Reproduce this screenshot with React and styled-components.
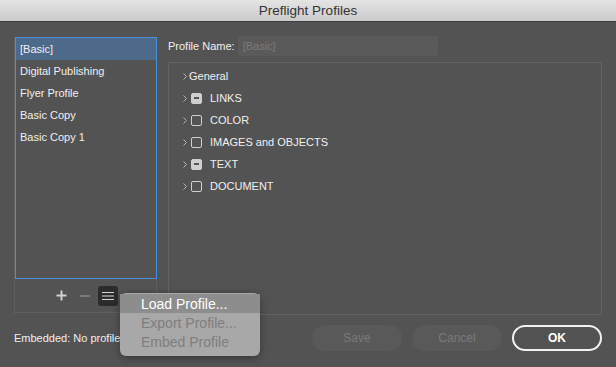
import styled, { createGlobalStyle } from "styled-components";

const GlobalStyle = createGlobalStyle`
  html, body {
    margin: 0;
    padding: 0;
    background: #535353;
    overflow: hidden;
  }
  * {
    box-sizing: border-box;
  }
`;

const Window = styled.div`
  position: relative;
  width: 616px;
  height: 367px;
  background: #535353;
  font-family: "Liberation Sans", Arial, sans-serif;
  font-size: 11px;
  color: #f0f0f0;
`;

const TitleBar = styled.div`
  height: 22px;
  display: flex;
  align-items: center;
  justify-content: center;
  background: linear-gradient(#e4e4e4, #cbcbcb);
  border-bottom: 1px solid #3c3c3c;
  color: #333;
  font-size: 13.5px;
`;

const Main = styled.div`
  display: grid;
  grid-template-columns: 143px 434px;
  column-gap: 11px;
  padding: 15px 14px 0 14px;
`;

const LeftBox = styled.div`
  height: 276px;
  border: 1px solid #5f5f5f;
  display: flex;
  flex-direction: column;
`;

const List = styled.div`
  height: 242px;
  margin: -1px -1px 0 0;
  border: 1px solid #4a90d9;
`;

const ListRow = styled.div`
  height: 22px;
  display: flex;
  align-items: center;
  padding-left: 4px;
  background: ${(p) => (p.$selected ? "#4d6a8a" : "transparent")};
`;

const ListTools = styled.div`
  flex: 1;
  display: flex;
  align-items: center;
  justify-content: center;
  padding-left: 2px;
`;

const ToolGlyph = styled.span`
  width: 12px;
  margin-right: ${(p) => (p.$dim ? "7px" : "12px")};
  display: flex;
  justify-content: center;
`;

const MenuButton = styled.div`
  width: 20px;
  height: 20px;
  border-radius: 3px;
  background: #2c2c2c;
  display: flex;
  align-items: center;
  justify-content: center;
`;

const Right = styled.div`
  display: flex;
  flex-direction: column;
  gap: 6px;
`;

const NameRow = styled.div`
  height: 20px;
  display: flex;
  align-items: center;
  gap: 3px;
  margin-top: -1px;
`;

const NameInput = styled.div`
  width: 200px;
  height: 20px;
  background: #5a5a5a;
  border-radius: 2px;
  color: #7b7b7b;
  display: flex;
  align-items: center;
  padding-left: 5px;
`;

const Tree = styled.div`
  height: 253px;
  border: 1px solid #626262;
  padding-top: 2px;
  padding-left: 12px;
`;

const TreeRow = styled.div`
  height: 22px;
  display: flex;
  align-items: center;
`;

const Chevron = styled.svg`
  width: 8px;
  height: 9px;
  margin-right: ${(p) => (p.$tight ? "0" : "2px")};
`;

const Check = styled.span`
  width: 11px;
  height: 11px;
  border-radius: 2px;
  margin-right: 8px;
  display: flex;
  align-items: center;
  justify-content: center;
  border: 1px solid #cfcfcf;
  background: ${(p) => (p.$mixed ? "#cfcfcf" : "transparent")};

  &::after {
    content: "";
    display: ${(p) => (p.$mixed ? "block" : "none")};
    width: 5px;
    height: 2px;
    background: #555;
  }
`;

const Footer = styled.div`
  display: flex;
  align-items: center;
  padding: 10px 14px 0 14px;
  gap: 10px;
`;

const Embedded = styled.div`
  flex: 1;
`;

const Button = styled.div`
  width: 90px;
  height: 26px;
  border-radius: 13px;
  display: flex;
  align-items: center;
  justify-content: center;
  font-size: 12px;
  background: ${(p) => (p.$primary ? "#535353" : "#595959")};
  color: ${(p) => (p.$primary ? "#ffffff" : "#7a7a7a")};
  border: ${(p) => (p.$primary ? "2px solid #f2f2f2" : "none")};
  font-weight: ${(p) => (p.$primary ? "bold" : "normal")};
`;

const Menu = styled.div`
  position: absolute;
  left: 120px;
  top: 293px;
  width: 140px;
  padding: 1px 0 5px;
  border-radius: 6px;
  background: #a8a8a8;
  box-shadow: 0 2px 8px rgba(0, 0, 0, 0.35);
  font-size: 14px;
`;

const MenuItem = styled.div`
  height: 19px;
  display: flex;
  align-items: center;
  padding-left: 21px;
  color: ${(p) => (p.$disabled ? "#7e7e7e" : "#ffffff")};
  background: ${(p) => (p.$active ? "#8d8d8d" : "transparent")};
`;

const profiles = ["[Basic]", "Digital Publishing", "Flyer Profile", "Basic Copy", "Basic Copy 1"];

const sections = [
  { label: "General" },
  { label: "LINKS", check: "mixed" },
  { label: "COLOR", check: "off" },
  { label: "IMAGES and OBJECTS", check: "off" },
  { label: "TEXT", check: "mixed" },
  { label: "DOCUMENT", check: "off" },
];

function ChevronIcon({ tight }) {
  return (
    <Chevron viewBox="0 0 8 9" $tight={tight}>
      <path d="M2.5 1.5l3 3-3 3" fill="none" stroke="#b5b5b5" strokeWidth="1" />
    </Chevron>
  );
}

export default function App() {
  return (
    <Window>
      <GlobalStyle />
      <TitleBar>Preflight Profiles</TitleBar>
      <Main>
        <LeftBox>
          <List>
            {profiles.map((name, i) => (
              <ListRow key={name} $selected={i === 0}>
                {name}
              </ListRow>
            ))}
          </List>
          <ListTools>
            <ToolGlyph>
              <svg width="11" height="11" viewBox="0 0 11 11">
                <path d="M5.5 0.5v10M0.5 5.5h10" stroke="#d0d0d0" strokeWidth="2" />
              </svg>
            </ToolGlyph>
            <ToolGlyph $dim>
              <svg width="10" height="2" viewBox="0 0 10 2">
                <path d="M0 1h10" stroke="#7a7a7a" strokeWidth="2" />
              </svg>
            </ToolGlyph>
            <MenuButton>
              <svg width="12" height="8" viewBox="0 0 12 8">
                <path d="M0 0.5h12M0 4h12M0 7.5h12" stroke="#d8d8d8" strokeWidth="1" />
              </svg>
            </MenuButton>
          </ListTools>
        </LeftBox>
        <Right>
          <NameRow>
            <span>Profile Name:</span>
            <NameInput>[Basic]</NameInput>
          </NameRow>
          <Tree>
            {sections.map((s) => (
              <TreeRow key={s.label}>
                <ChevronIcon tight={!s.check} />
                {s.check && <Check $mixed={s.check === "mixed"} />}
                {s.label}
              </TreeRow>
            ))}
          </Tree>
        </Right>
      </Main>
      <Footer>
        <Embedded>Embedded: No profile</Embedded>
        <Button>Save</Button>
        <Button>Cancel</Button>
        <Button $primary>OK</Button>
      </Footer>
      <Menu>
        <MenuItem $active>Load Profile...</MenuItem>
        <MenuItem $disabled>Export Profile...</MenuItem>
        <MenuItem $disabled>Embed Profile</MenuItem>
      </Menu>
    </Window>
  );
}
